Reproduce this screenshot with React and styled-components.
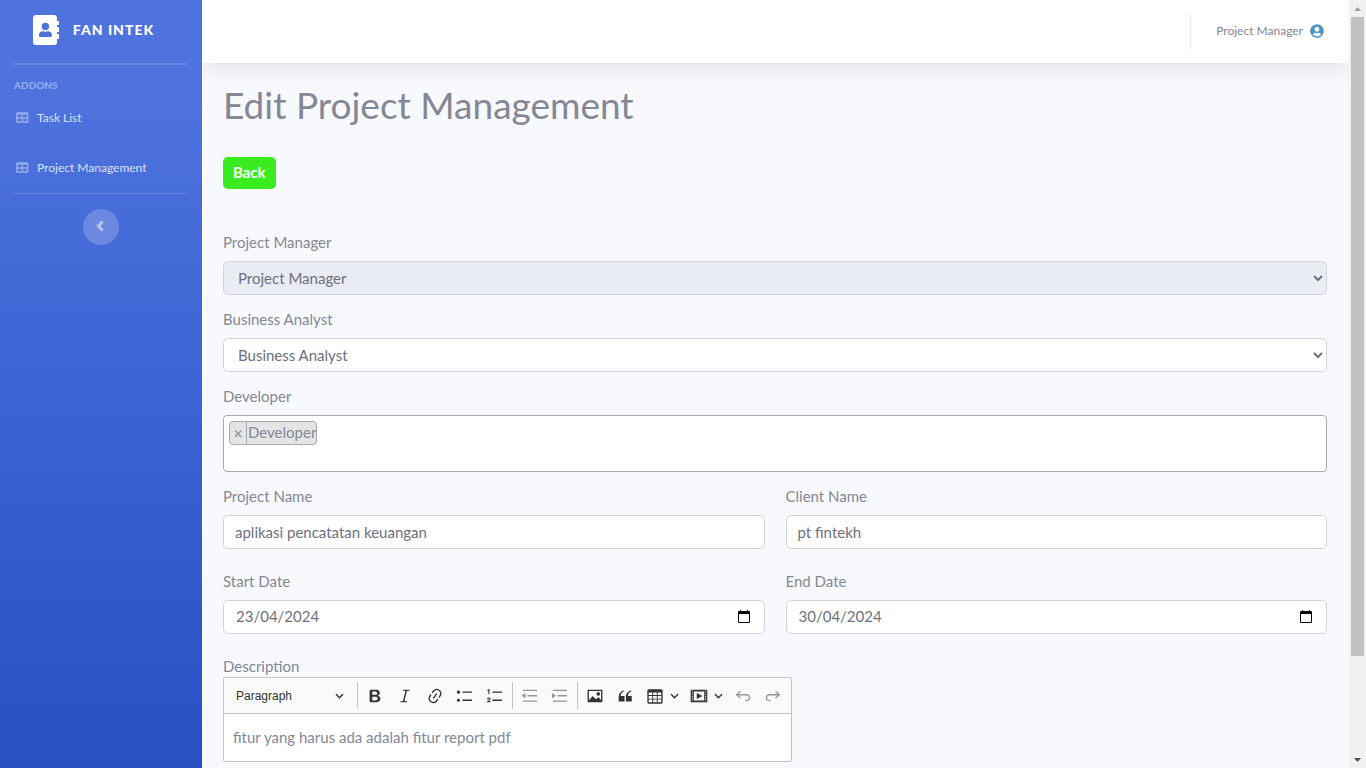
import React from "react";
import styled, { createGlobalStyle } from "styled-components";
import { FaUserCircle, FaAngleLeft } from "react-icons/fa";

const GlobalStyle = createGlobalStyle`
  *, *::before, *::after { box-sizing: border-box; }
  body {
    margin: 0;
    background: #f8f9fc;
    color: #858796;
    font: 400 15px/21px Lato, "Open Sans", sans-serif;
  }
  input, select, button { font-family: inherit; }
`;

const Shell = styled.div`
  display: flex;
  height: 100vh;
  overflow: hidden;
`;

const Sidebar = styled.nav`
  flex: 0 0 202px;
  display: flex;
  flex-direction: column;
  padding: 0 15px 0 14px;
  background: linear-gradient(180deg, #4e73df 11%, #224abe 115%);
`;

const Brand = styled.a`
  display: flex;
  align-items: center;
  justify-content: center;
  gap: 14px;
  height: 63px;
  padding: 0 14px 4px 0;
  color: #fff;
  font-size: 14px;
  font-weight: 900;
  letter-spacing: 1px;
  text-decoration: none;
`;

const Rule = styled.hr`
  width: 100%;
  height: ${(p) => p.$size}px;
  margin: 0;
  border: 0;
  background: rgba(255, 255, 255, 0.17);
`;

const SideHeading = styled.h2`
  margin: 13px 0 1px;
  color: rgba(255, 255, 255, 0.4);
  font-size: 10px;
  line-height: 14px;
  font-weight: 900;
`;

const SideLink = styled.a`
  display: flex;
  align-items: center;
  gap: 8px;
  height: 50px;
  padding: 0 0 1px 2px;
  color: rgba(255, 255, 255, 0.8);
  font-size: 12px;
  text-decoration: none;
  svg { color: rgba(255, 255, 255, 0.35); }
`;

const Collapse = styled.button`
  display: grid;
  place-items: center;
  align-self: center;
  width: 36px;
  height: 36px;
  margin: 15px 0 0;
  padding: 0 2px 2px 0;
  border: 0;
  border-radius: 50%;
  background: rgba(255, 255, 255, 0.2);
  color: rgba(255, 255, 255, 0.5);
  svg { width: 16px; height: 16px; stroke: currentColor; stroke-width: 16px; }
`;

const Main = styled.div`
  flex: 1;
  min-width: 0;
  display: flex;
  flex-direction: column;
  overflow: hidden;
`;

const Topbar = styled.header`
  flex: 0 0 63px;
  display: flex;
  align-items: center;
  justify-content: flex-end;
  padding-right: 25px;
  background: #fff;
  box-shadow: 0 2px 25px rgba(58, 59, 69, 0.15);
`;

const UserLink = styled.a`
  display: flex;
  align-items: center;
  gap: 7px;
  height: 35px;
  padding: 0 0 2px 25px;
  border-left: 1px solid #e3e6f0;
  color: #858796;
  font-size: 12px;
  text-decoration: none;
  svg { width: 14px; height: 14px; color: #4e94c4; }
`;

const Content = styled.main`
  flex: 1;
  min-height: 0;
  overflow: hidden;
  padding: 20px 22px 0 21px;
`;

const Title = styled.h1`
  margin: 0 0 31px;
  font-size: 37px;
  line-height: 43px;
  font-weight: 400;
`;

const BackButton = styled.button`
  display: block;
  height: 32px;
  margin: 0 0 43px;
  padding: 0 10px 2px;
  border: 0;
  border-radius: 5px;
  background: #3aeb20;
  color: #fff;
  font-size: 15px;
  font-weight: 700;
`;

const Field = styled.div`
  display: flex;
  flex-direction: column;
  align-items: stretch;
  margin-bottom: ${(p) => (p.$loose ? 22 : 14)}px;
`;

const Label = styled.label`
  display: block;
  margin-bottom: ${(p) => (p.$tight ? 0 : 8)}px;
`;

const control = `
  width: 100%;
  height: 34px;
  border: 1px solid #d1d3e2;
  border-radius: 5px;
  background: #fff;
  color: #6e707e;
  font-size: 15px;
`;

const Select = styled.select`
  ${control}
  padding: 0 0 0 10px;
  &:disabled { background: #eaecf4; color: #6e707e; opacity: 1; }
`;

const Input = styled.input`
  ${control}
  padding: 0 11px;
`;

const DateBox = styled.div`
  ${control}
  display: flex;
  align-items: center;
  padding: 0 13px 0 12px;
  input {
    flex: 1;
    min-width: 0;
    padding: 0 0 2px;
    border: 0;
    outline: 0;
    background: none;
    color: inherit;
    font-size: 15px;
  }
  button {
    display: flex;
    padding: 0;
    border: 0;
    background: none;
    color: #000;
  }
`;

const Columns = styled.div`
  display: grid;
  grid-template-columns: 1fr 1fr;
  column-gap: 21px;
`;

const TagBox = styled.div`
  display: flex;
  align-items: flex-start;
  height: 57px;
  padding: 5px;
  border: 1px solid #aaa;
  border-radius: 4px;
  background: #fff;
`;

const Tag = styled.span`
  display: flex;
  height: 24px;
  border: 1px solid #aaa;
  border-radius: 4px;
  background: #e4e4e4;
  line-height: 21px;
  button {
    width: 17px;
    padding: 0;
    border: 0;
    border-right: 1px solid #aaa;
    background: none;
    color: #999;
    font-size: 15px;
    font-weight: 700;
    line-height: 20px;
  }
  span { padding-left: 1px; }
`;

const Editor = styled.div`
  width: 569px;
  max-width: 100%;
  border: 1px solid #c4c4c4;
  border-radius: 2px;
  background: #fff;
`;

const Toolbar = styled.div`
  display: flex;
  align-items: center;
  height: 36px;
  padding-left: 4px;
  border-bottom: 1px solid #c4c4c4;
  background: #fafafa;
`;

const Tool = styled.button`
  display: flex;
  align-items: center;
  justify-content: center;
  gap: 6px;
  width: ${(p) => (p.$menu ? 44 : 30)}px;
  height: 30px;
  padding: 0;
  border: 0;
  background: none;
  color: #333;
  opacity: ${(p) => (p.disabled ? 0.5 : 1)};
`;

const BlockType = styled.button`
  display: flex;
  align-items: center;
  justify-content: space-between;
  width: 123px;
  height: 30px;
  margin-right: 4px;
  padding: 0 7px 0 8px;
  border: 0;
  background: none;
  color: #333;
  font: 12px "Liberation Sans", Arial, sans-serif;
`;

const Separator = styled.span`
  width: 1px;
  height: 27px;
  margin: 0 2px;
  background: #c4c4c4;
`;

const EditorText = styled.div`
  padding: 13px 9px;
  outline: 0;
`;

const ScrollTrack = styled.div`
  flex: 0 0 17px;
  display: flex;
  flex-direction: column;
  background: #f1f1f1;
`;

const ScrollArrow = styled.span`
  display: grid;
  place-items: center;
  height: 17px;
  color: ${(p) => (p.$dim ? "#a3a3a3" : "#505050")};
`;

const ScrollRail = styled.div`
  flex: 1;
  padding: 0 2px;
`;

const ScrollThumb = styled.div`
  height: 87%;
  background: #c1c1c1;
`;

const Icon = ({ d, flip }) => (
  <svg width="18" height="18" viewBox="0 0 20 20" fill="currentColor" aria-hidden="true">
    <path d={d} fillRule="evenodd" transform={flip ? "matrix(-1 0 0 1 20 0)" : undefined} />
  </svg>
);

const Caret = () => (
  <svg width="9" height="9" viewBox="0 0 10 10" fill="currentColor" aria-hidden="true">
    <path d="M.941 4.523a.75.75 0 1 1 1.06-1.06l3.006 3.005 3.005-3.005a.75.75 0 1 1 1.06 1.06l-3.549 3.55a.75.75 0 0 1-1.168-.136L.941 4.523z" />
  </svg>
);

const NumberedIcon = () => (
  <svg width="18" height="18" viewBox="0 0 20 20" fill="none" stroke="currentColor" strokeWidth="1.5" strokeLinecap="round" aria-hidden="true">
    <path d="M7.75 5.75h9.5M7.75 14.75h9.5" />
    <path d="M2 3.6l1.3-.7v4.6M1.8 13.2c.3-1.4 2.7-1.3 2.6.1-.1 1.1-1.7 1.9-2.5 3h2.7" strokeWidth="1.2" />
  </svg>
);

const CalendarIcon = () => (
  <svg width="14" height="14" viewBox="0 0 14 14" aria-hidden="true">
    <path fillRule="evenodd" fill="currentColor" d="M3 0h1v1h6V0h1v1h1a1 1 0 0 1 1 1v10a1 1 0 0 1-1 1H2a1 1 0 0 1-1-1V2a1 1 0 0 1 1-1h1zM2 4v8h10V4z" />
  </svg>
);

const BookIcon = () => (
  <svg width="26" height="30" viewBox="0 0 26 30" aria-hidden="true">
    <path
      fill="currentColor"
      fillRule="evenodd"
      d="M3 0h18a3 3 0 0 1 3 3v3h1.300a.7.7 0 0 1 .7.7v2.600a.7.7 0 0 1-.7.7H24v2h1.300a.7.7 0 0 1 .7.7v3.600a.7.7 0 0 1-.7.7H24v2h1.300a.7.7 0 0 1 .7.7v3.600a.7.7 0 0 1-.7.7H24v3a3 3 0 0 1-3 3H3a3 3 0 0 1-3-3V3a3 3 0 0 1 3-3zM12.400 7.700a3.700 3.700 0 1 0 0 7.400 3.700 3.700 0 0 0 0-7.400zM9.800 16.200c-2.200 0-3.900 1.600-3.900 3.600v1c0 .6.5 1.100 1.200 1.100h10.600c.7 0 1.200-.5 1.200-1.100v-1c0-2-1.700-3.600-3.900-3.600-.8 0-1.400.5-2.600.5s-1.800-.5-2.600-.5z"
    />
  </svg>
);

const TableIcon = () => (
  <svg width="13" height="11" viewBox="0 0 13 11" aria-hidden="true">
    <path fill="currentColor" fillRule="evenodd" d="M1.500 0h9.500A1.500 1.500 0 0 1 12.500 1.500v8A1.500 1.500 0 0 1 11 11H1.500A1.500 1.500 0 0 1 0 9.500v-8A1.500 1.500 0 0 1 1.500 0zM2 3v2h3.500V3zM7 3v2h3.500V3zM2 7v2h3.500V7zM7 7v2h3.500V7z" />
  </svg>
);

const paths = {
  bold: "M10.187 17H5.773c-.637 0-1.092-.138-1.364-.415-.273-.277-.409-.718-.409-1.323V4.738c0-.617.14-1.062.419-1.332.279-.27.73-.406 1.354-.406h4.68c.69 0 1.288.041 1.793.124.506.083.96.242 1.36.478.341.197.644.447.906.75a3.262 3.262 0 0 1 .808 2.162c0 1.401-.722 2.426-2.167 3.075C15.05 10.175 16 11.315 16 13.01a3.756 3.756 0 0 1-2.296 3.504 6.1 6.1 0 0 1-1.517.377c-.571.073-1.238.11-2 .11zm-.217-6.217H7v4.087h3.069c1.977 0 2.965-.69 2.965-2.072 0-.707-.256-1.22-.768-1.537-.512-.319-1.277-.478-2.296-.478zM7 5.13v3.619h2.606c.729 0 1.292-.067 1.69-.2a1.6 1.6 0 0 0 .91-.765c.165-.267.247-.566.247-.897 0-.707-.26-1.176-.778-1.409-.519-.232-1.31-.348-2.375-.348H7z",
  italic: "m9.586 14.633.021.004c-.036.335.095.655.393.962.082.083.173.15.274.201h1.474a.6.6 0 1 1 0 1.2H5.304a.6.6 0 0 1 0-1.2h1.15c.474-.07.809-.182 1.005-.334.157-.122.291-.32.404-.597l2.416-9.55a1.053 1.053 0 0 0-.281-.823 1.12 1.12 0 0 0-.442-.296H8.15a.6.6 0 0 1 0-1.2h6.443a.6.6 0 1 1 0 1.2h-1.195c-.376.056-.65.155-.823.296-.215.175-.423.439-.623.79l-2.366 9.347z",
  link: "m11.077 15 .991-1.416a.75.75 0 1 1 1.229.86l-1.148 1.64a.748.748 0 0 1-.217.206 5.251 5.251 0 0 1-8.503-5.955.741.741 0 0 1 .12-.274l1.147-1.639a.75.75 0 1 1 1.228.86L4.933 10.7l.006.003a3.75 3.75 0 0 0 6.132 4.294l.006.004zm5.494-5.335a.748.748 0 0 1-.12.274l-1.147 1.639a.75.75 0 1 1-1.228-.86l.86-1.23a3.75 3.75 0 0 0-6.144-4.301l-.86 1.229a.75.75 0 0 1-1.229-.86l1.148-1.64a.748.748 0 0 1 .217-.206 5.251 5.251 0 0 1 8.503 5.955zm-4.563-2.532a.75.75 0 0 1 .184 1.045l-3.155 4.505a.75.75 0 1 1-1.229-.86l3.155-4.506a.75.75 0 0 1 1.045-.184z",
  bullets: "M7 5.75c0 .414.336.75.75.75h9.5a.75.75 0 1 0 0-1.5h-9.5a.75.75 0 0 0-.75.75zm-6 0C1 4.784 1.777 4 2.75 4c.966 0 1.75.777 1.75 1.75 0 .966-.777 1.75-1.75 1.75C1.784 7.5 1 6.723 1 5.75zm6 9c0 .414.336.75.75.75h9.5a.75.75 0 1 0 0-1.5h-9.5a.75.75 0 0 0-.75.75zm-6 0c0-.966.777-1.75 1.75-1.75.966 0 1.75.777 1.75 1.75 0 .966-.777 1.75-1.75 1.75-.966 0-1.75-.777-1.75-1.75z",
  outdent: "M2 3.75c0 .414.336.75.75.75h14.5a.75.75 0 1 0 0-1.5H2.75a.75.75 0 0 0-.75.75zm5 6c0 .414.336.75.75.75h9.5a.75.75 0 1 0 0-1.5h-9.5a.75.75 0 0 0-.75.75zM2.75 16.5h14.5a.75.75 0 1 0 0-1.5H2.75a.75.75 0 1 0 0 1.5zm1.618-9.55L.98 9.358a.4.4 0 0 0 .013.661l3.39 2.207A.4.4 0 0 0 5 11.892V7.275a.4.4 0 0 0-.632-.326z",
  indent: "M2 3.75c0 .414.336.75.75.75h14.5a.75.75 0 1 0 0-1.5H2.75a.75.75 0 0 0-.75.75zm5 6c0 .414.336.75.75.75h9.5a.75.75 0 1 0 0-1.5h-9.5a.75.75 0 0 0-.75.75zM2.75 16.5h14.5a.75.75 0 1 0 0-1.5H2.75a.75.75 0 1 0 0 1.5zM1.632 6.95 5.02 9.358a.4.4 0 0 1-.013.661l-3.39 2.207A.4.4 0 0 1 1 11.892V7.275a.4.4 0 0 1 .632-.326z",
  image: "M6.91 10.54c.26-.23.64-.21.88.03l3.36 3.14 2.23-2.06a.64.64 0 0 1 .87 0l2.52 2.97V4.5H3.2v10.12l3.71-4.08zm10.27-7.51c.6 0 1.09.47 1.09 1.05v11.84c0 .59-.49 1.06-1.09 1.06H2.79c-.6 0-1.09-.47-1.09-1.06V4.08c0-.58.49-1.05 1.1-1.05h14.38zm-5.22 5.56a1.96 1.96 0 1 1 3.4-1.96 1.96 1.96 0 0 1-3.4 1.96z",
  quote: "M3 10.423a6.5 6.5 0 0 1 6.056-6.408l.038.67C6.448 5.423 5.354 7.663 5.22 10H9c.552 0 .5.432.5.986v4.511c0 .554-.448.503-1 .503h-5c-.552 0-.5-.449-.5-1.003v-4.574zm8 0a6.5 6.5 0 0 1 6.056-6.408l.038.67c-2.646.739-3.74 2.979-3.873 5.315H17c.552 0 .5.432.5.986v4.511c0 .554-.448.503-1 .503h-5c-.552 0-.5-.449-.5-1.003v-4.574z",
  table: "M3 6v3h4V6H3zm0 4v3h4v-3H3zm0 4v3h4v-3H3zm5 3h4v-3H8v3zm5 0h4v-3h-4v3zm4-4v-3h-4v3h4zm0-4V6h-4v3h4zm1.5 8a1.5 1.5 0 0 1-1.5 1.5H3A1.5 1.5 0 0 1 1.5 17V4c.222-.863 1.068-1.5 2-1.5h13c.932 0 1.778.637 2 1.5v13zM12 13v-3H8v3h4zm0-4V6H8v3h4z",
  media: "M18.68 3.03c.6 0 .59-.03.59.55v12.84c0 .59.01.56-.59.56H1.29c-.6 0-.59.03-.59-.56V3.58c0-.58-.01-.55.6-.55h17.38zM15.77 15V5H4.2v10h11.57zM2 4v1h1V4H2zm0 2v1h1V6H2zm0 2v1h1V8H2zm0 2v1h1v-1H2zm0 2v1h1v-1H2zm0 2v1h1v-1H2zM17 4v1h1V4h-1zm0 2v1h1V6h-1zm0 2v1h1V8h-1zm0 2v1h1v-1h-1zm0 2v1h1v-1h-1zm0 2v1h1v-1h-1zM7.5 7.177a.4.4 0 0 1 .593-.351l5.133 2.824a.4.4 0 0 1 0 .7l-5.133 2.824a.4.4 0 0 1-.593-.35V7.176v.001z",
  undo: "m5.042 9.367 2.189 1.837a.75.75 0 0 1-.965 1.149l-3.788-3.18a.747.747 0 0 1-.21-.284.75.75 0 0 1 .17-.945L6.23 4.762a.75.75 0 1 1 .964 1.15L4.863 7.866h8.917A.75.75 0 0 1 14 7.9a4 4 0 1 1-1.477 7.718l.344-1.489a2.5 2.5 0 1 0 1.094-4.73l.008-.032H5.042z",
};

const DateField = ({ id, label, value }) => (
  <Field $loose>
    <Label htmlFor={id}>{label}</Label>
    <DateBox>
      <input id={id} type="text" inputMode="numeric" defaultValue={value} />
      <button type="button" aria-label={`Choose ${label}`}><CalendarIcon /></button>
    </DateBox>
  </Field>
);

export default function App() {
  return (
    <>
      <GlobalStyle />
      <Shell>
        <Sidebar>
          <Brand href="#"><BookIcon /><span>FAN INTEK</span></Brand>
          <Rule $size={2} />
          <SideHeading>ADDONS</SideHeading>
          <SideLink href="#"><TableIcon />Task List</SideLink>
          <SideLink href="#"><TableIcon />Project Management</SideLink>
          <Rule $size={1} />
          <Collapse type="button" aria-label="Collapse sidebar"><FaAngleLeft /></Collapse>
        </Sidebar>

        <Main>
          <Topbar>
            <UserLink href="#">Project Manager<FaUserCircle /></UserLink>
          </Topbar>
          <Content>
            <Title>Edit Project Management</Title>
            <BackButton type="button">Back</BackButton>

            <Field>
              <Label htmlFor="manager">Project Manager</Label>
              <Select id="manager" disabled><option>Project Manager</option></Select>
            </Field>
            <Field>
              <Label htmlFor="analyst">Business Analyst</Label>
              <Select id="analyst"><option>Business Analyst</option></Select>
            </Field>
            <Field>
              <Label as="span" id="developer">Developer</Label>
              <TagBox role="group" aria-labelledby="developer">
                <Tag><button type="button" aria-label="Remove Developer">×</button><span>Developer</span></Tag>
              </TagBox>
            </Field>

            <Columns>
              <Field $loose>
                <Label htmlFor="project">Project Name</Label>
                <Input id="project" defaultValue="aplikasi pencatatan keuangan" />
              </Field>
              <Field $loose>
                <Label htmlFor="client">Client Name</Label>
                <Input id="client" defaultValue="pt fintekh" />
              </Field>
              <DateField id="start" label="Start Date" value="23/04/2024" />
              <DateField id="end" label="End Date" value="30/04/2024" />
            </Columns>

            <Label as="span" id="description" $tight>Description</Label>
            <Editor>
              <Toolbar role="toolbar">
                <BlockType type="button">Paragraph<Caret /></BlockType>
                <Separator />
                <Tool type="button" aria-label="Bold"><Icon d={paths.bold} /></Tool>
                <Tool type="button" aria-label="Italic"><Icon d={paths.italic} /></Tool>
                <Tool type="button" aria-label="Link"><Icon d={paths.link} /></Tool>
                <Tool type="button" aria-label="Bulleted list"><Icon d={paths.bullets} /></Tool>
                <Tool type="button" aria-label="Numbered list"><NumberedIcon /></Tool>
                <Separator />
                <Tool type="button" aria-label="Decrease indent" disabled><Icon d={paths.outdent} /></Tool>
                <Tool type="button" aria-label="Increase indent" disabled><Icon d={paths.indent} /></Tool>
                <Separator />
                <Tool type="button" aria-label="Insert image"><Icon d={paths.image} /></Tool>
                <Tool type="button" aria-label="Block quote"><Icon d={paths.quote} /></Tool>
                <Tool type="button" aria-label="Insert table" $menu><Icon d={paths.table} /><Caret /></Tool>
                <Tool type="button" aria-label="Insert media" $menu><Icon d={paths.media} /><Caret /></Tool>
                <Tool type="button" aria-label="Undo" disabled><Icon d={paths.undo} /></Tool>
                <Tool type="button" aria-label="Redo" disabled><Icon d={paths.undo} flip /></Tool>
              </Toolbar>
              <EditorText role="textbox" aria-labelledby="description" contentEditable suppressContentEditableWarning>
                fitur yang harus ada adalah fitur report pdf
              </EditorText>
            </Editor>
          </Content>
        </Main>

        <ScrollTrack aria-hidden="true">
          <ScrollArrow $dim><svg width="7" height="4" viewBox="0 0 7 4"><path d="M0 4 3.5 0 7 4z" fill="currentColor" /></svg></ScrollArrow>
          <ScrollRail><ScrollThumb /></ScrollRail>
          <ScrollArrow><svg width="7" height="4" viewBox="0 0 7 4"><path d="M0 0 3.5 4 7 0z" fill="currentColor" /></svg></ScrollArrow>
        </ScrollTrack>
      </Shell>
    </>
  );
}
